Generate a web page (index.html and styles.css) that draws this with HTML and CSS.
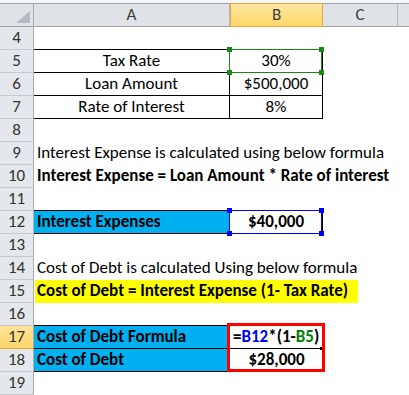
FILE: index.html
```html
<!DOCTYPE html>
<html>
<head>
<meta charset="utf-8">
<link rel="stylesheet" href="styles.css">
</head>
<body>
<div class="sheet">
  <div class="topstrip"></div>
  <div class="grid">
    <div class="ch corner"><span class="tri"></span></div>
    <div class="ch">A</div>
    <div class="ch active">B</div>
    <div class="ch">C</div>
    <div class="ch last"></div>

    <div class="rh">4</div><div class="c bb"></div><div class="c bb"></div><div class="c"></div><div class="c"></div>

    <div class="rh">5</div>
    <div class="c ctr bb br">Tax Rate</div>
    <div class="c ctr bb br rel">30%<div class="sel green"><i class="h tl"></i><i class="h tr"></i><i class="h bl"></i><i class="h brh"></i></div></div>
    <div class="c"></div><div class="c"></div>

    <div class="rh">6</div>
    <div class="c ctr bb br">Loan Amount</div>
    <div class="c ctr bb br">$500,000</div>
    <div class="c"></div><div class="c"></div>

    <div class="rh">7</div>
    <div class="c ctr bb br">Rate of Interest</div>
    <div class="c ctr bb br">8%</div>
    <div class="c"></div><div class="c"></div>

    <div class="rh">8</div><div class="c wide"></div>

    <div class="rh">9</div><div class="c wide txt">Interest Expense is calculated using below formula</div>

    <div class="rh">10</div><div class="c wide txt bold">Interest Expense = Loan Amount * Rate of interest</div>

    <div class="rh">11</div><div class="c bb"></div><div class="c bb"></div><div class="c"></div><div class="c"></div>

    <div class="rh">12</div>
    <div class="c cyan bold bb br txt">Interest Expenses</div>
    <div class="c ctr bold bb br rel">$40,000<div class="sel blue"><i class="h tl"></i><i class="h tr"></i><i class="h bl"></i><i class="h brh"></i></div></div>
    <div class="c"></div><div class="c"></div>

    <div class="rh">13</div><div class="c wide"></div>

    <div class="rh">14</div><div class="c wide txt">Cost of Debt is calculated Using below formula</div>

    <div class="rh">15</div><div class="c wide"><span class="hl">Cost of Debt = Interest Expense (1- Tax Rate)</span></div>

    <div class="rh">16</div><div class="c bb"></div><div class="c bb"></div><div class="c"></div><div class="c"></div>

    <div class="rh sel-row">17</div>
    <div class="c cyan bold bb br txt">Cost of Debt Formula</div>
    <div class="c bold bb rel fx">=<span class="ref-b">B12</span>*(1-<span class="ref-g">B5</span>)<i class="dot"></i><div class="redbox"></div></div>
    <div class="c"></div><div class="c"></div>

    <div class="rh">18</div>
    <div class="c cyan bold bb br txt">Cost of Debt</div>
    <div class="c ctr bold">$28,000</div>
    <div class="c"></div><div class="c"></div>

    <div class="rh">19</div><div class="c wide"></div>
  </div>
</div>
</body>
</html>
```

FILE: styles.css
```css
* { box-sizing: border-box; }
html, body { margin: 0; padding: 0; background: #fff; }
body {
  font-family: Carlito, Calibri, "Liberation Sans", sans-serif;
  font-size: 17px;
  color: #000;
  width: 409px;
  height: 395px;
  overflow: hidden;
}
.topstrip { height: 3px; background: #f6f7f9; }
.grid {
  display: grid;
  grid-template-columns: 34px 196px 93px 75px 11px;
  grid-template-rows: 24px repeat(16, 23px);
}
.ch {
  background: #dfe2e7;
  border-top: 1px solid #9fa3a9;
  border-bottom: 1px solid #9fa3a9;
  border-right: 1px solid #b5b9bf;
  text-align: center;
  line-height: 22px;
  color: #3b3b3b;
}
.ch.last { border-right: none; }
.ch.corner { position: relative; border-right: 1px solid #a9adb3; }
.tri {
  position: absolute;
  right: 3px;
  bottom: 3px;
  width: 0; height: 0;
  border-left: 14px solid transparent;
  border-bottom: 12px solid #b6bac0;
}
.ch.active {
  background: linear-gradient(#fee7a0, #fdd768);
  border: 1px solid #eca53c;
  color: #3b3b3b;
}
.rh {
  background: #e4e7eb;
  border-right: 1px solid #a9adb3;
  border-bottom: 1px solid #c6cacf;
  text-align: center;
  line-height: 22px;
  color: #333;
}
.rh.sel-row {
  background: linear-gradient(#fee39a, #fdd56c);
  border-bottom: 1px solid #eca53c;
}
.c {
  line-height: 22px;
  white-space: nowrap;
}
.wide { grid-column: 2 / span 4; }
.ctr { text-align: center; }
.txt { padding-left: 3px; }
.bold { font-weight: bold; }
.bb { border-bottom: 1px solid #000; }
.br { border-right: 1px solid #000; }
.cyan { background: #00b0f0; }
.rel { position: relative; }
.hl {
  display: inline-block;
  margin-left: 1px;
  width: 323px;
  height: 23px;
  padding-left: 2px;
  background: #ffff00;
  font-weight: bold;
}
.sel {
  position: absolute;
  left: -1px;
  top: -1px;
  right: 0;
  bottom: -1px;
  border: 1px solid;
}
.sel.green { border-color: #158a15; }
.sel.blue { border-color: #0000ff; }
.h {
  position: absolute;
  width: 5px;
  height: 5px;
}
.green .h { background: #158a15; }
.blue .h { background: #0000ff; }
.h.tl { left: -3px; top: -3px; }
.h.tr { right: -3px; top: -3px; }
.h.bl { left: -3px; bottom: -3px; }
.h.brh { right: -3px; bottom: -3px; }
.fx { padding-left: 3px; }
.ref-b { color: #0000ff; }
.ref-g { color: #008000; }
.dot {
  position: absolute;
  right: 0;
  bottom: -2px;
  width: 3px;
  height: 3px;
  background: #000;
}
.redbox {
  position: absolute;
  left: -3px;
  top: -3px;
  width: 98px;
  height: 49px;
  border: 3px solid #ff0000;
  z-index: 2;
}
```
